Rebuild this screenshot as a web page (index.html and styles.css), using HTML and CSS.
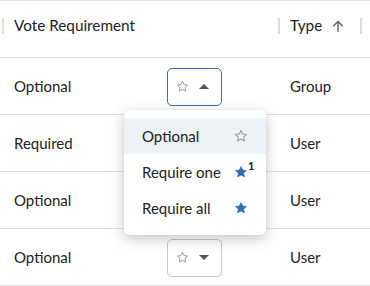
FILE: index.html
```html
<!DOCTYPE html>
<html>
	<head>
		<meta charset="UTF-8">
		<title>Vote Requirement</title>
		<link rel="stylesheet" href="styles.css">
	</head>
	<body>
		<svg width="0" height="0" class="defs">
			<defs>
				<polygon id="star" points="12,2.5 14.9,8.6 21.5,9.4 16.6,13.9 17.9,20.5 12,17.2 6.1,20.5 7.4,13.9 2.5,9.4 9.1,8.6"/>
			</defs>
		</svg>
		<div class="grid">
			<div class="row head">
				<div class="cell"><span class="sep"></span><span class="title">Vote Requirement</span></div>
				<div class="cell"><span class="sep"></span><span class="title">Type</span>
					<svg class="sort" width="12" height="13" viewBox="0 0 12 13"><path d="M6 12V1.5M1.2 6.2L6 1.4l4.8 4.8" fill="none" stroke="#666" stroke-width="1.4"/></svg>
				</div>
				<div class="cell"><span class="sep"></span></div>
			</div>

			<div class="row">
				<div class="cell">
					<span class="label">Optional</span>
					<button class="pick open">
						<svg class="star-o" width="13" height="13" viewBox="0 0 24 24"><use href="#star"/></svg>
						<span class="caret up"></span>
					</button>
				</div>
				<div class="cell"><span class="label">Group</span></div>
				<div class="cell"></div>
			</div>
			<div class="row">
				<div class="cell">
					<span class="label">Required</span>
					<button class="pick">
						<svg class="star-o" width="13" height="13" viewBox="0 0 24 24"><use href="#star"/></svg>
						<span class="caret"></span>
					</button>
				</div>
				<div class="cell"><span class="label">User</span></div>
				<div class="cell"></div>
			</div>
			<div class="row">
				<div class="cell">
					<span class="label">Optional</span>
					<button class="pick">
						<svg class="star-o" width="13" height="13" viewBox="0 0 24 24"><use href="#star"/></svg>
						<span class="caret"></span>
					</button>
				</div>
				<div class="cell"><span class="label">User</span></div>
				<div class="cell"></div>
			</div>
			<div class="row">
				<div class="cell">
					<span class="label">Optional</span>
					<button class="pick">
						<svg class="star-o" width="13" height="13" viewBox="0 0 24 24"><use href="#star"/></svg>
						<span class="caret"></span>
					</button>
				</div>
				<div class="cell"><span class="label">User</span></div>
				<div class="cell"></div>
			</div>

			<!-- dropdown of the first row -->
			<ul class="menu">
				<li class="active">Optional
					<svg class="star-o" width="14" height="14" viewBox="0 0 24 24"><use href="#star"/></svg>
				</li>
				<li>Require one
					<span class="icon">
						<svg class="star-f" width="14" height="14" viewBox="0 0 24 24"><use href="#star"/></svg>
						<sup>1</sup>
					</span>
				</li>
				<li>Require all
					<svg class="star-f" width="14" height="14" viewBox="0 0 24 24"><use href="#star"/></svg>
				</li>
			</ul>
		</div>
	</body>
</html>
```

FILE: styles.css
```css
body{
	margin: 0;
	padding: 0;
	background: #fff;
	font-family: Lato, "Liberation Sans", sans-serif;
	font-size: 15px;
	color: #222;
}
.defs{
	position: absolute;
}
.grid{
	position: relative;
	width: 370px;
	border-top: 1px solid #e3e3e3;
}
.row{
	display: grid;
	grid-template-columns: 276px 82px 1fr;
	padding-left: 2px;
	height: 56px;
	border-bottom: 1px solid #e0e0e0;
}
.cell{
	display: flex;
	align-items: center;
}
.row:not(.head) .cell{
	padding-left: 12px;
}
.head .cell{
	align-items: flex-start;
	padding-top: 17px;
	height: 16px;
}
.sep{
	width: 2px;
	height: 16px;
	flex: none;
	background: #dedede;
	margin-right: 10px;
}
.head .title{
	color: #222;
	font-size: 15.3px;
	line-height: 16px;
	margin-top: -1px;
}
.sort{
	margin-left: 10px;
	margin-top: 2px;
}
.label{
	width: 153px;
	margin-top: -1px;
}
.pick{
	display: flex;
	align-items: center;
	width: 55px;
	height: 38px;
	padding: 0 0 0 8px;
	background: #fff;
	border: 1px solid #c8c8c8;
	border-radius: 5px;
	margin-top: 1px;
}
.pick.open{
	border-color: #3a6fb5;
}
.star-o use{
	fill: none;
	stroke: #999;
	stroke-width: 1.8;
	stroke-linejoin: round;
}
.star-f use{
	fill: #2f6cb8;
	stroke: #2f6cb8;
	stroke-width: 1;
	stroke-linejoin: round;
}
.caret{
	margin-left: 10px;
	width: 0;
	height: 0;
	border-left: 5px solid transparent;
	border-right: 5px solid transparent;
	border-top: 5px solid #555;
}
.caret.up{
	border-top: 0;
	border-bottom: 5px solid #555;
}
.menu{
	position: absolute;
	left: 124px;
	top: 109px;
	width: 142px;
	margin: 0;
	padding: 9px 0 8px;
	list-style: none;
	background: #fff;
	border-radius: 5px;
	box-shadow: 0 4px 14px rgba(0,0,0,0.22), 0 0 2px rgba(0,0,0,0.08);
}
.menu li{
	display: flex;
	align-items: center;
	justify-content: space-between;
	height: 36px;
	padding: 0 18px 0 18px;
	margin-top: -1px;
	margin-bottom: 1px;
}
.menu li.active{
	background: #edf2f7;
}
.menu .icon{
	position: relative;
	display: flex;
}
.menu sup{
	position: absolute;
	left: 14px;
	top: -6px;
	font-size: 11px;
	font-weight: bold;
	color: #222;
}
```
